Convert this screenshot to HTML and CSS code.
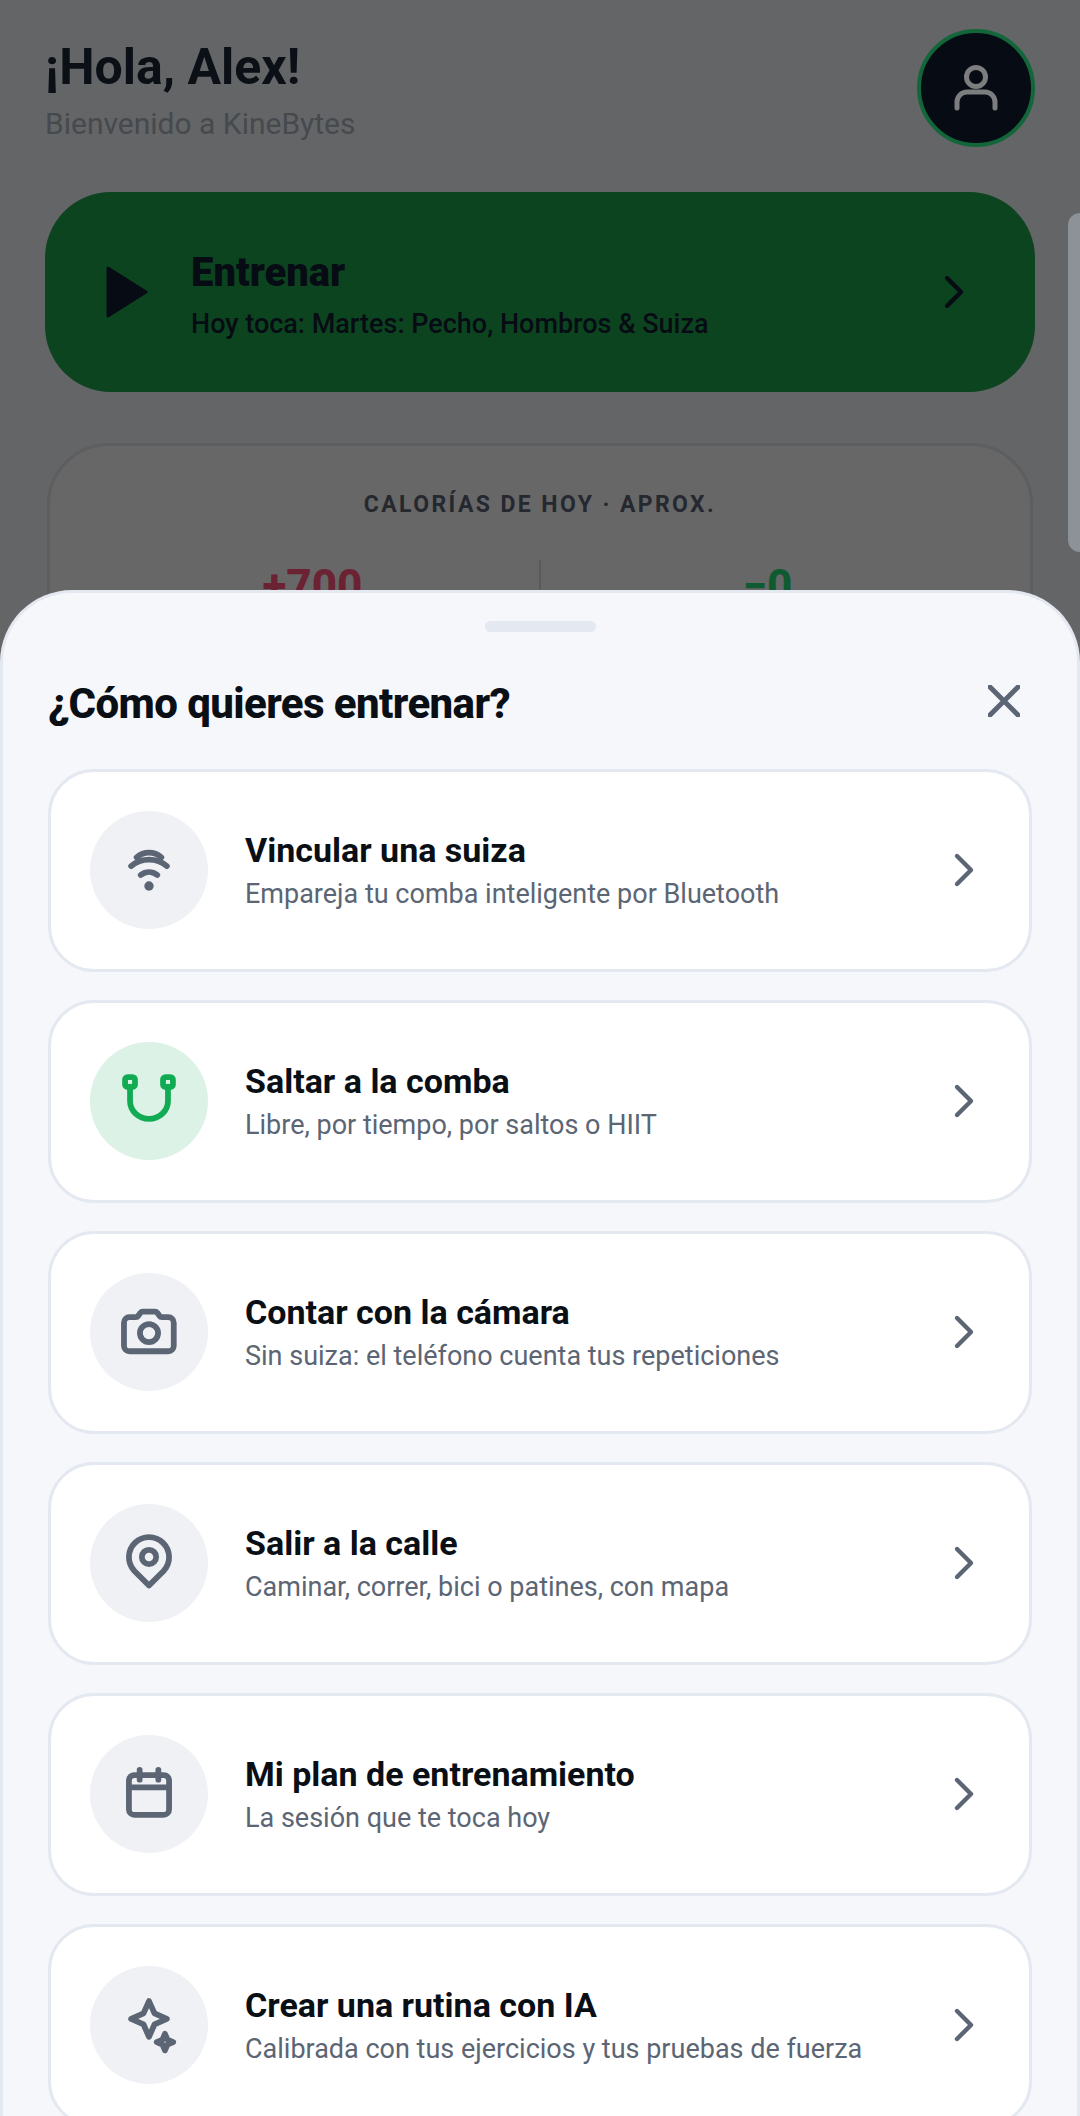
FILE: index.html
```html
<!DOCTYPE html>
<html lang="es">
<head>
    <meta charset="UTF-8">
    <meta name="viewport" content="width=device-width, initial-scale=1.0">
    <title>KineBytes</title>
    <link rel="stylesheet" href="styles.css">
</head>
<body>
    <div class="screen">
        <!-- home page, dimmed behind the sheet -->
        <div class="home">
            <div class="home-header">
                <div>
                    <h1 class="hello">¡Hola, Alex!</h1>
                    <p class="welcome">Bienvenido a KineBytes</p>
                </div>
                <div class="avatar">
                    <svg class="icon-user" viewBox="0 0 48 48"><circle cx="24" cy="13" r="9.5"/><path d="M5 44v-6a10 10 0 0 1 10-10h18a10 10 0 0 1 10 10v6"/></svg>
                </div>
            </div>

            <div class="hero">
                <svg class="hero-play" viewBox="0 0 42 52"><path d="M2 2 40 26 2 50z"/></svg>
                <div class="hero-text">
                    <h2>Entrenar</h2>
                    <p>Hoy toca: Martes: Pecho, Hombros &amp; Suiza</p>
                </div>
                <svg class="hero-chevron" viewBox="0 0 24 24"><path d="M9 5l7 7-7 7"/></svg>
            </div>

            <div class="calories">
                <div class="calories-label">CALORÍAS DE HOY · APROX.</div>
                <div class="calories-row">
                    <div class="calories-num plus">+700</div>
                    <div class="calories-num minus">−0</div>
                </div>
            </div>
        </div>
        <div class="edge-thumb"></div>

        <!-- bottom sheet -->
        <div class="sheet">
            <div class="handle"></div>
            <div class="sheet-header">
                <h2>¿Cómo quieres entrenar?</h2>
                <svg class="close" viewBox="0 0 32 32"><path d="M2 2l28 28M30 2 2 30"/></svg>
            </div>

            <div class="options">
                <div class="option">
                    <div class="option-icon">
                        <svg viewBox="0 0 24 24"><path d="M7.5 7.4c2.6-2.3 6.4-2.3 9 0"/><path d="M5.5 10.6c3.6-3.2 9.4-3.2 13 0"/><path d="M9 13.8c1.8-1.4 4.2-1.4 6 0"/><circle class="solid" cx="12" cy="17.8" r="1.7"/></svg>
                    </div>
                    <div class="option-text">
                        <h3>Vincular una suiza</h3>
                        <p>Empareja tu comba inteligente por Bluetooth</p>
                    </div>
                    <svg class="chevron" viewBox="0 0 24 24"><path d="M9 5l7 7-7 7"/></svg>
                </div>

                <div class="option">
                    <div class="option-icon green">
                        <svg viewBox="0 0 24 24"><path d="M5.1 6.8V12a6.9 6.5 0 0 0 13.8 0V6.8"/><rect x="3.3" y="3.3" width="3.6" height="3.6" rx=".9"/><rect x="17.1" y="3.3" width="3.6" height="3.6" rx=".9"/></svg>
                    </div>
                    <div class="option-text">
                        <h3>Saltar a la comba</h3>
                        <p>Libre, por tiempo, por saltos o HIIT</p>
                    </div>
                    <svg class="chevron" viewBox="0 0 24 24"><path d="M9 5l7 7-7 7"/></svg>
                </div>

                <div class="option">
                    <div class="option-icon">
                        <svg viewBox="0 0 24 24"><path d="M4.9 6.6h2.3c.4 0 .7-.2.9-.5l.8-1.1c.2-.3.5-.4.9-.4h4.3c.4 0 .7.1.9.4l.8 1.1c.2.3.5.5.9.5h2.3a2 2 0 0 1 2 2V17a2 2 0 0 1-2 2H4.9a2 2 0 0 1-2-2V8.6a2 2 0 0 1 2-2z"/><circle cx="12" cy="12.4" r="3.3"/></svg>
                    </div>
                    <div class="option-text">
                        <h3>Contar con la cámara</h3>
                        <p>Sin suiza: el teléfono cuenta tus repeticiones</p>
                    </div>
                    <svg class="chevron" viewBox="0 0 24 24"><path d="M9 5l7 7-7 7"/></svg>
                </div>

                <div class="option">
                    <div class="option-icon">
                        <svg viewBox="0 0 24 24"><path d="M12 20.2 6.7 14.9a7.3 7.3 0 1 1 10.6 0z"/><circle cx="12" cy="9.8" r="2.6"/></svg>
                    </div>
                    <div class="option-text">
                        <h3>Salir a la calle</h3>
                        <p>Caminar, correr, bici o patines, con mapa</p>
                    </div>
                    <svg class="chevron" viewBox="0 0 24 24"><path d="M9 5l7 7-7 7"/></svg>
                </div>

                <div class="option">
                    <div class="option-icon">
                        <svg viewBox="0 0 24 24"><rect x="4.7" y="5.1" width="14.6" height="14.5" rx="2"/><path d="M4.7 9.6h14.6M8.6 3.2v3.6M15.4 3.2v3.6"/></svg>
                    </div>
                    <div class="option-text">
                        <h3>Mi plan de entrenamiento</h3>
                        <p>La sesión que te toca hoy</p>
                    </div>
                    <svg class="chevron" viewBox="0 0 24 24"><path d="M9 5l7 7-7 7"/></svg>
                </div>

                <div class="option">
                    <div class="option-icon">
                        <svg viewBox="0 0 24 24"><path d="M12 3.3l2 4.5 4.5 2-4.5 2-2 4.5-2-4.5-4.5-2 4.5-2z"/><path d="M17.8 15.2l.9 2.1 2.1.9-2.1.9-.9 2.1-.9-2.1-2.1-.9 2.1-.9z"/></svg>
                    </div>
                    <div class="option-text">
                        <h3>Crear una rutina con IA</h3>
                        <p>Calibrada con tus ejercicios y tus pruebas de fuerza</p>
                    </div>
                    <svg class="chevron" viewBox="0 0 24 24"><path d="M9 5l7 7-7 7"/></svg>
                </div>
            </div>
        </div>
    </div>
</body>
</html>
```

FILE: styles.css
```css
* {
    box-sizing: border-box;
}

body {
    margin: 0;
    font-family: Roboto, "Liberation Sans", sans-serif;
    background-color: #646567;
}

h1, h2, h3, p {
    margin: 0;
}

.screen {
    position: relative;
    height: 2116px;
    overflow: hidden;
    background-color: #646567;
}

/* Home page (colours are already dimmed) */
.home {
    padding: 29px 45px 0;
}

.home-header {
    display: flex;
    justify-content: space-between;
    align-items: flex-start;
}

.hello {
    margin-top: 10px;
    font-size: 50px;
    line-height: 56px;
    font-weight: 700;
    color: #0b1017;
}

.welcome {
    margin-top: 11px;
    font-size: 30px;
    line-height: 36px;
    color: #46494d;
}

.avatar {
    width: 118px;
    height: 118px;
    border: 4px solid #12663a;
    border-radius: 50%;
    background-color: #070c14;
    display: flex;
    align-items: center;
    justify-content: center;
}

.icon-user {
    width: 48px;
    height: 48px;
    fill: none;
    stroke: #7c7d7f;
    stroke-width: 5px;
    stroke-linecap: round;
}

.hero {
    margin-top: 45px;
    height: 200px;
    border-radius: 66px;
    background-color: #0d4420;
    padding: 0 70px 0 61px;
    display: flex;
    align-items: center;
}

.hero-play {
    width: 42px;
    height: 52px;
    fill: #070c14;
    stroke: #070c14;
    stroke-width: 3px;
    stroke-linejoin: round;
}

.hero-text {
    flex: 1;
    margin-left: 43px;
    padding-top: 5px;
}

.hero-text h2 {
    font-size: 40px;
    line-height: 47px;
    font-weight: 900;
    color: #070c14;
}

.hero-text p {
    margin-top: 12px;
    font-size: 27px;
    line-height: 32px;
    font-weight: 500;
    color: #070c14;
}

.hero-chevron {
    width: 48px;
    height: 48px;
    margin-right: -12px;
    fill: none;
    stroke: #070c14;
    stroke-width: 2.2px;
    stroke-linecap: round;
    stroke-linejoin: round;
}

.calories {
    margin: 51px 2px 0;
    height: 320px;
    border: 3px solid #5d5e60;
    border-radius: 62px;
    background-color: #676767;
    text-align: center;
}

.calories-label {
    margin-top: 45px;
    font-size: 23px;
    line-height: 28px;
    font-weight: 700;
    letter-spacing: 2.4px;
    color: #25282f;
}

.calories-row {
    margin-top: 41px;
    padding: 0 36px;
    display: flex;
}

.calories-num {
    flex: 1;
    padding-top: 3px;
    font-size: 44px;
    line-height: 46px;
    font-weight: 800;
}

.calories-num.plus {
    color: #6b2232;
    border-right: 2px solid #58595b;
}

.calories-num.minus {
    color: #0f5a30;
}

.edge-thumb {
    position: absolute;
    top: 213px;
    right: 0;
    width: 12px;
    height: 339px;
    border-radius: 12px 0 0 12px;
    background-color: #8d9299;
}

/* Bottom sheet */
.sheet {
    position: absolute;
    top: 590px;
    left: 0;
    right: 0;
    height: 1600px;
    padding: 28px 45px 0;
    border: 3px solid #e4e8f0;
    border-bottom: 0;
    border-radius: 72px 72px 0 0;
    background-color: #f5f7fb;
}

.handle {
    width: 111px;
    height: 11px;
    margin: 0 auto;
    border-radius: 6px;
    background-color: #e4e8f0;
}

.sheet-header {
    height: 137px;
    padding-top: 47px;
    display: flex;
    justify-content: space-between;
    align-items: flex-start;
}

.sheet-header h2 {
    font-size: 42px;
    line-height: 50px;
    font-weight: 800;
    letter-spacing: -0.6px;
    color: #0a0f16;
}

.close {
    width: 32px;
    height: 32px;
    margin: 6px 12px 0 0;
    fill: none;
    stroke: #5b6574;
    stroke-width: 5px;
    stroke-linecap: round;
}

.options {
    display: flex;
    flex-direction: column;
    gap: 28px;
}

.option {
    height: 203px;
    flex-shrink: 0;
    padding: 0 39px;
    border: 3px solid #e4e8f0;
    border-radius: 46px;
    background-color: #fff;
    display: flex;
    align-items: center;
}

.option-icon {
    width: 118px;
    height: 118px;
    flex-shrink: 0;
    margin-top: -2px;
    border-radius: 50%;
    background-color: #eff1f5;
    display: flex;
    align-items: center;
    justify-content: center;
}

.option-icon svg {
    width: 66px;
    height: 66px;
    fill: none;
    stroke: #5b6574;
    stroke-width: 2.1px;
    stroke-linecap: round;
    stroke-linejoin: round;
}

.option-icon .solid {
    fill: #5b6574;
    stroke: none;
}

.option-icon.green {
    background-color: #dcf2e6;
}

.option-icon.green svg {
    stroke: #10ab52;
}

.option-text {
    flex: 1;
    margin-left: 37px;
}

.option-text h3 {
    font-size: 34px;
    line-height: 40px;
    font-weight: 700;
    color: #0a0f16;
}

.option-text p {
    margin-top: 7px;
    font-size: 27px;
    line-height: 34px;
    color: #5b6574;
}

.chevron {
    width: 48px;
    height: 48px;
    margin-top: -2px;
    margin-right: 3px;
    fill: none;
    stroke: #5b6574;
    stroke-width: 2.2px;
    stroke-linecap: round;
    stroke-linejoin: round;
}
```
